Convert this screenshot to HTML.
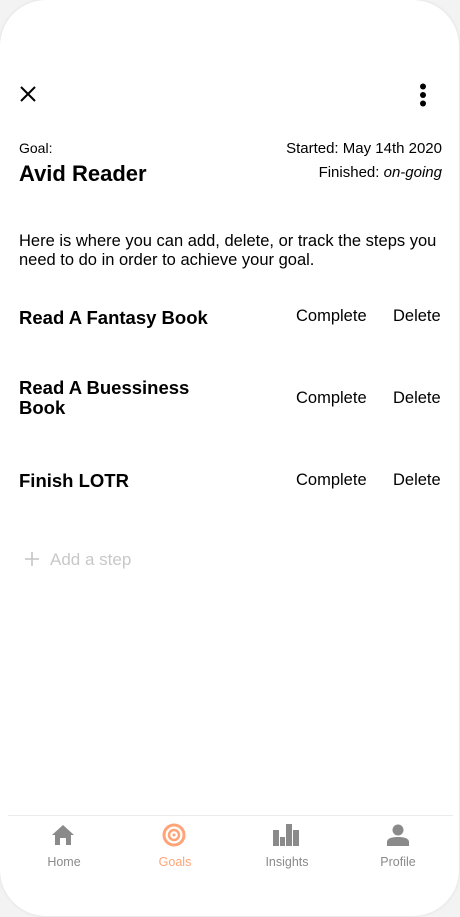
<!DOCTYPE html>
<html><head><style>
html,body{margin:0;padding:0;}
body{width:460px;height:917px;background:#f3f3f3;position:relative;overflow:hidden;font-family:"Liberation Sans",sans-serif;color:#000;}
.frame{position:absolute;left:0;top:0;width:459px;height:916px;background:#fff;border-radius:46px;box-shadow:0 0 3px rgba(0,0,0,.1);}
.a{position:absolute;white-space:nowrap;}
.b{font-weight:bold;font-size:18.5px;letter-spacing:0;}
.c{font-size:16.5px;}
.nav{position:absolute;top:855px;font-size:12.5px;color:#8a8a8a;transform:translateX(-50%);}
</style></head><body>
<div class="frame">
<svg class="a" style="left:19px;top:85px" width="18" height="18" viewBox="0 0 18 18"><path d="M2 2L16 16M16 2L2 16" stroke="#000" stroke-width="2"/></svg>
<svg class="a" style="left:418px;top:82px" width="10" height="26"><circle cx="5" cy="4.5" r="3" fill="#000"/><circle cx="5" cy="13" r="3" fill="#000"/><circle cx="5" cy="21.5" r="3" fill="#000"/></svg>
<div class="a" style="left:19px;top:140px;font-size:14px">Goal:</div>
<div class="a" style="left:19px;top:161px;font-size:22px;font-weight:bold">Avid Reader</div>
<div class="a" style="right:17px;top:140px;font-size:15px">Started: May 14th 2020</div>
<div class="a" style="right:17px;top:164px;font-size:15px">Finished: <i>on-going</i></div>
<div class="a" style="left:19px;top:232px;font-size:16.5px;line-height:19px;white-space:normal;width:430px">Here is where you can add, delete, or track the steps you need to do in order to achieve your goal.</div>
<div class="a b" style="left:19px;top:307px">Read A Fantasy Book</div>
<div class="a c" style="left:296px;top:307px">Complete</div>
<div class="a c" style="left:393px;top:307px">Delete</div>
<div class="a b" style="left:19px;top:378px;line-height:20px">Read A Buessiness<br>Book</div>
<div class="a c" style="left:296px;top:389px">Complete</div>
<div class="a c" style="left:393px;top:389px">Delete</div>
<div class="a b" style="left:19px;top:470px">Finish LOTR</div>
<div class="a c" style="left:296px;top:471px">Complete</div>
<div class="a c" style="left:393px;top:471px">Delete</div>
<svg class="a" style="left:25px;top:552px" width="14" height="14"><path d="M7 0V14M0 7H14" stroke="#c4c4c4" stroke-width="1.6"/></svg>
<div class="a" style="left:50px;top:550px;font-size:17px;color:#c8c8c8">Add a step</div>
<div class="a" style="left:8px;top:815px;width:445px;height:1px;background:#ebebeb"></div>
<svg class="a" style="left:51px;top:824px" width="24" height="22" viewBox="0 0 24 22"><path d="M12 1L1 11H4V21H9V14H15V21H20V11H23Z" fill="#8a8a8a"/></svg>
<svg class="a" style="left:162px;top:823px" width="24" height="24"><circle cx="12" cy="12" r="10" fill="none" stroke="#ffa477" stroke-width="3"/><circle cx="12" cy="12" r="5" fill="none" stroke="#ffa477" stroke-width="2.5"/><circle cx="12" cy="12" r="1.5" fill="#ffa477"/></svg>
<svg class="a" style="left:273px;top:824px" width="27" height="22"><rect x="0" y="6" width="6" height="16" fill="#8a8a8a"/><rect x="7" y="13" width="5" height="9" fill="#8a8a8a"/><rect x="13" y="0" width="6" height="22" fill="#8a8a8a"/><rect x="20" y="6" width="6" height="16" fill="#8a8a8a"/></svg>
<svg class="a" style="left:386px;top:824px" width="24" height="22"><circle cx="12" cy="6" r="5.5" fill="#8a8a8a"/><path d="M1 22V18C1 14 7 13 12 13S23 14 23 18V22Z" fill="#8a8a8a"/></svg>
<div class="nav" style="left:64px">Home</div>
<div class="nav" style="left:175px;color:#ffa477">Goals</div>
<div class="nav" style="left:287px">Insights</div>
<div class="nav" style="left:398px">Profile</div>
</div>
</body></html>
